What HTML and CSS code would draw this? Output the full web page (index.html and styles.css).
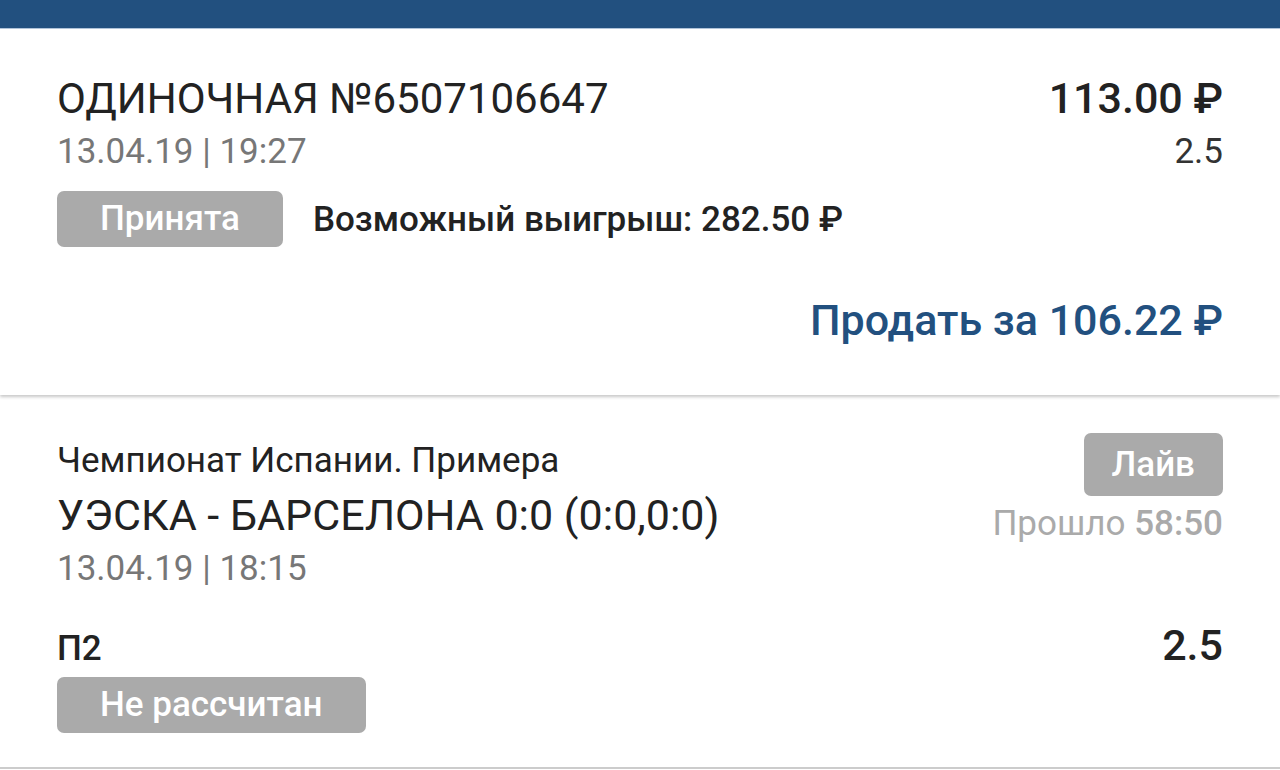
FILE: index.html
```html
<!DOCTYPE html>
<html lang="ru">
<head>
    <meta charset="UTF-8">
    <meta name="viewport" content="width=device-width, initial-scale=1.0">
    <title>Ставка №6507106647</title>
    <link rel="stylesheet" href="styles.css">
</head>
<body>

<header class="topbar"></header>

<!-- Bet summary -->
<section class="bet">
    <div class="row">
        <span class="bet-title">ОДИНОЧНАЯ №6507106647</span>
        <span class="bet-sum">113.00 ₽</span>
    </div>
    <div class="row">
        <span class="date">13.04.19 | 19:27</span>
        <span class="odds">2.5</span>
    </div>
    <div class="status-row">
        <span class="badge">Принята</span>
        <span class="win">Возможный выигрыш: 282.50 ₽</span>
    </div>
    <div class="sell-row">
        <a href="#sell" class="sell">Продать за 106.22 ₽</a>
    </div>
</section>

<!-- Event -->
<section class="event">
    <div class="event-head">
        <div class="event-info">
            <div class="league">Чемпионат Испании. Примера</div>
            <div class="match">УЭСКА - БАРСЕЛОНА 0:0 (0:0,0:0)</div>
            <div class="date">13.04.19 | 18:15</div>
        </div>
        <div class="event-live">
            <span class="badge badge-live">Лайв</span>
            <div class="elapsed">Прошло <b>58:50</b></div>
        </div>
    </div>
    <div class="row outcome-row">
        <span class="outcome">П2</span>
        <span class="outcome-odds">2.5</span>
    </div>
    <span class="badge badge-result">Не рассчитан</span>
</section>

</body>
</html>
```

FILE: styles.css
```css
body {
    font-family: Roboto, "Noto Sans", sans-serif;
    background-color: #fff;
    color: #222;
    margin: 0;
    padding: 0;
}
.topbar {
    height: 28px;
    background-color: #22507f;
    border-bottom: 1px solid #b3c6dc;
}
.row {
    display: flex;
    justify-content: space-between;
    align-items: baseline;
}
.bet {
    padding: 45px 57px 0 57px;
    height: 321px;
    box-shadow: 0 2px 3px rgba(0, 0, 0, 0.22);
    position: relative;
}
.bet-title {
    font-size: 42px;
    line-height: 48px;
    color: #222;
}
.bet-sum {
    font-size: 43px;
    line-height: 48px;
    font-weight: 500;
    color: #222;
}
.date {
    font-size: 35px;
    line-height: 40px;
    color: #777;
}
.bet .date {
    margin-top: 9px;
}
.odds {
    font-size: 35px;
    line-height: 40px;
    color: #333;
}
.status-row {
    display: flex;
    align-items: center;
    margin-top: 19px;
}
.badge {
    display: inline-block;
    background-color: #aaa;
    color: #fff;
    font-size: 35px;
    font-weight: 500;
    line-height: 56px;
    padding: 0 43px;
    border-radius: 7px;
}
.win {
    font-size: 35px;
    font-weight: 500;
    color: #222;
    margin-left: 30px;
}
.sell-row {
    display: flex;
    justify-content: flex-end;
    margin-top: 49px;
}
.sell {
    font-size: 43px;
    font-weight: 500;
    color: #22507f;
    text-decoration: none;
    line-height: 48px;
}
.event {
    padding: 38px 57px 0 57px;
    height: 334px;
    border-bottom: 2px solid #ccc;
}
.event-head {
    display: flex;
    justify-content: space-between;
}
.league {
    font-size: 35px;
    line-height: 40px;
    margin-top: 8px;
}
.match {
    font-size: 43px;
    line-height: 48px;
    margin-top: 10px;
}
.event .date {
    margin-top: 10px;
}
.event-live {
    display: flex;
    flex-direction: column;
    align-items: flex-end;
}
.badge-live {
    line-height: 63px;
    padding: 0 28px;
}
.elapsed {
    font-size: 35px;
    line-height: 40px;
    color: #aaa;
    margin-top: 8px;
}
.elapsed b {
    font-weight: 500;
}
.outcome-row {
    margin-top: 32px;
}
.outcome {
    font-size: 35px;
    font-weight: 500;
    line-height: 40px;
}
.outcome-odds {
    font-size: 43px;
    font-weight: 500;
    line-height: 48px;
}
.badge-result {
    margin-top: 8px;
}
```
